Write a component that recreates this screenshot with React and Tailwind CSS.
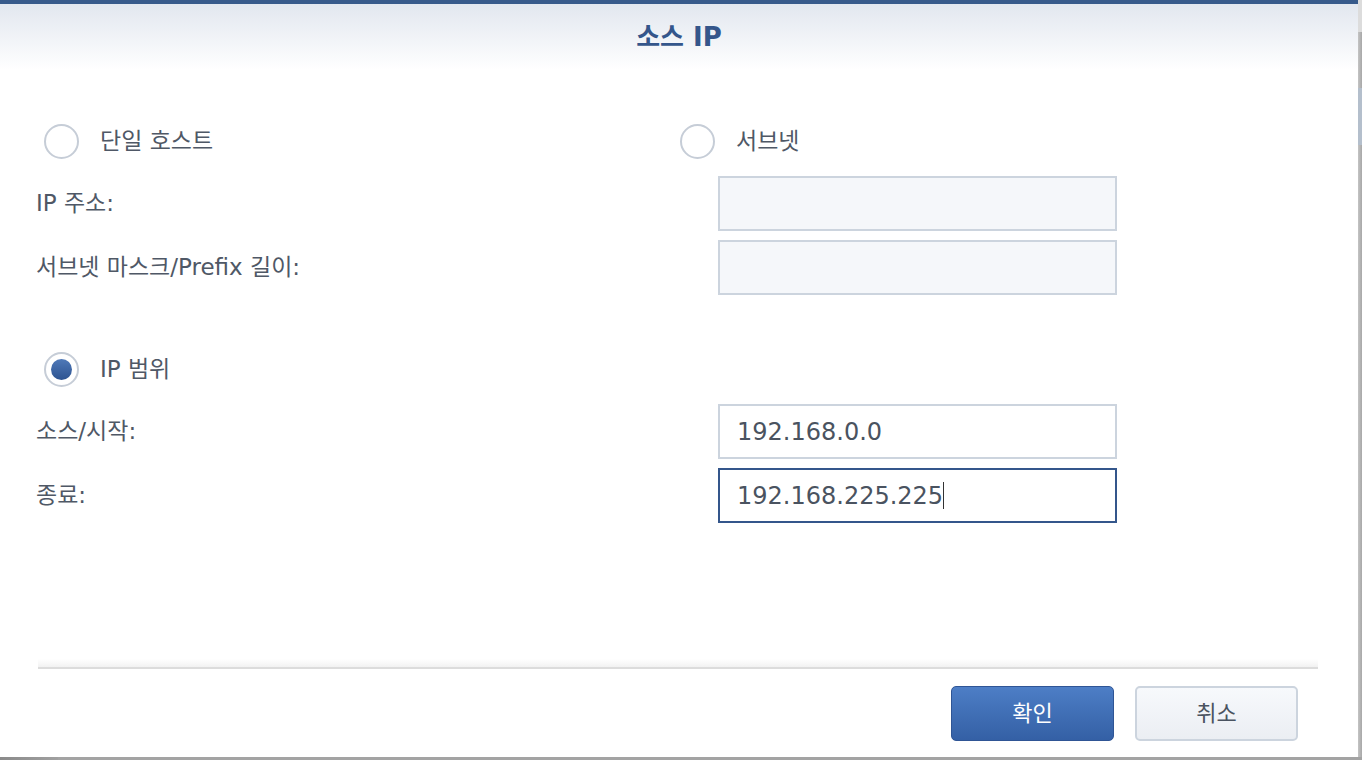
import React from "react";

const font = { fontFamily: '"DejaVu Sans", "Noto Sans CJK KR", sans-serif' };

const Radio = ({ checked, label }) => (
  <div className="flex items-center">
    <div className="w-[35px] h-[35px] rounded-full border-2 border-[#c6cdd7] bg-white flex items-center justify-center">
      {checked && (
        <div className="w-[21px] h-[21px] rounded-full bg-gradient-to-b from-[#4f79b8] to-[#2d5391]" />
      )}
    </div>
    <span className="ml-[21px] text-[23px] text-[#4f5866]">{label}</span>
  </div>
);

const Field = ({ label, value, active, filled, caret }) => (
  <div className="flex items-center h-[55px]">
    <div className="w-[682px] text-[23px] text-[#4f5866]">{label}</div>
    <div
      className={
        active
          ? "w-[399px] h-[55px] border-2 border-[#34568b] bg-white flex items-center pl-[17px]"
          : filled
          ? "w-[399px] h-[55px] border-2 border-[#ccd4de] bg-white flex items-center pl-[17px]"
          : "w-[399px] h-[55px] border-2 border-[#ccd4de] bg-[#f5f7fa] flex items-center pl-[17px]"
      }
    >
      <span className="text-[24px] text-[#4a5360]">{value}</span>
      {caret && <span className="w-[1px] h-[27px] bg-[#333]" />}
    </div>
  </div>
);

export default function App() {
  return (
    <div className="w-[1362px] h-[760px] flex flex-col bg-[#bdbdbd] overflow-hidden" style={font}>
      <div className="flex h-[757px]">
        <div className="w-[1358px] h-[757px] bg-white flex flex-col border-t-4 border-[#375a8b]">
          <div className="h-[66px] bg-gradient-to-b from-[#e2e7ef] to-white flex items-center justify-center">
            <h1 className="text-[26px] font-bold text-[#34568b]">소스 IP</h1>
          </div>

          <div className="flex flex-col pl-[36px] pt-[54px]">
            <div className="flex pl-[8px]">
              <div className="w-[636px]">
                <Radio label="단일 호스트" />
              </div>
              <Radio label="서브넷" />
            </div>
            <div className="flex flex-col gap-[9px] mt-[17px]">
              <Field label="IP 주소:" />
              <Field label="서브넷 마스크/Prefix 길이:" />
            </div>

            <div className="pl-[8px] mt-[57px]">
              <Radio checked label="IP 범위" />
            </div>
            <div className="flex flex-col gap-[9px] mt-[17px]">
              <Field label="소스/시작:" value="192.168.0.0" filled />
              <Field label="종료:" value="192.168.225.225" active caret />
            </div>
          </div>

          <div className="flex-1" />
          <div className="mx-[38px] mr-[40px] h-[8px] bg-gradient-to-b from-white to-[#f2f2f2]" />
          <div className="mx-[38px] mr-[40px] h-[2px] bg-[#dcdcdc]" />
          <div className="flex justify-end gap-[21px] pr-[60px] pt-[17px] pb-[16px]">
            <button className="w-[163px] h-[55px] rounded-[5px] border border-[#2f5595] bg-gradient-to-b from-[#4d7ec6] to-[#3460a5] text-white text-[22px]">
              확인
            </button>
            <button className="w-[163px] h-[55px] rounded-[5px] border-2 border-[#ccd4de] bg-gradient-to-b from-[#f7f9fc] to-[#ebeef3] text-[#4a5360] text-[22px]">
              취소
            </button>
          </div>
        </div>
        <div className="w-[4px] flex flex-col bg-gradient-to-r from-[#c4c4c4] to-[#a8a8a8]">
          <div className="h-[32px] bg-[#dcdcdc]" />
          <div className="h-[56px]" />
          <div className="h-[57px] bg-[#b4bfcc]" />
        </div>
      </div>
      <div className="h-[3px] flex bg-[#a3a3a3]">
        <div className="w-[58px] bg-gradient-to-r from-[#8a8a8a] to-[#a0a0a0]" />
      </div>
    </div>
  );
}
